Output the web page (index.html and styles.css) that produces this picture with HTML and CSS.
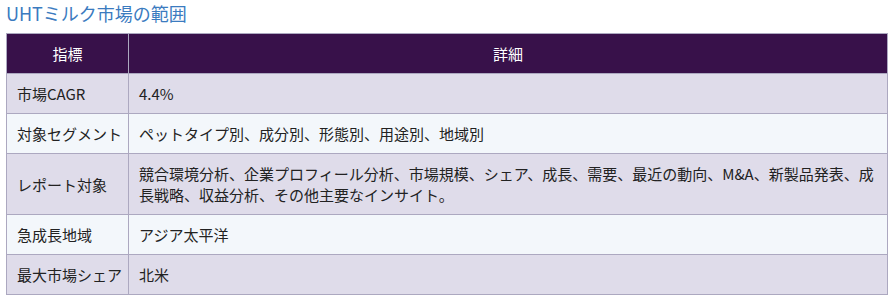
FILE: index.html
```html
<!DOCTYPE html>
<html lang="ja">
<head>
<meta charset="utf-8">
<link rel="stylesheet" href="styles.css">
</head>
<body>
<div class="scope">
  <h3 class="scope-title">UHTミルク市場の範囲</h3>
  <table class="scope-table">
    <colgroup><col class="col-key"><col class="col-val"></colgroup>
    <thead>
      <tr><th>指標</th><th>詳細</th></tr>
    </thead>
    <tbody>
      <tr class="odd"><td class="key">市場CAGR</td><td>4.4%</td></tr>
      <tr class="even"><td class="key">対象セグメント</td><td>ペットタイプ別、成分別、形態別、用途別、地域別</td></tr>
      <tr class="odd"><td class="key">レポート対象</td><td>競合環境分析、企業プロフィール分析、市場規模、シェア、成長、需要、最近の動向、M&amp;A、新製品発表、成長戦略、収益分析、その他主要なインサイト。</td></tr>
      <tr class="even"><td class="key">急成長地域</td><td>アジア太平洋</td></tr>
      <tr class="odd"><td class="key">最大市場シェア</td><td>北米</td></tr>
    </tbody>
  </table>
</div>
</body>
</html>
```
FILE: styles.css
```css
html, body {
  margin: 0;
  padding: 0;
  background: #ffffff;
}
body {
  font-family: "Noto Sans CJK JP", "Noto Sans", sans-serif;
  color: #222222;
}
.scope {
  padding: 0 7px 0 6px;
}
.scope-title {
  margin: 0;
  padding-top: 1px;
  height: 33px;
  box-sizing: border-box;
  font-size: 18px;
  font-weight: normal;
  line-height: 24px;
  color: #3b7bbf;
}
.scope-table {
  width: 882px;
  table-layout: fixed;
  border-collapse: collapse;
  font-size: 15px;
  line-height: 21px;
}
.scope-table .col-key {
  width: 122px;
}
.scope-table th,
.scope-table td {
  border: 1px solid #aca8c0;
  padding: 9px 10px;
  text-align: left;
  vertical-align: middle;
}
.scope-table .key {
  white-space: nowrap;
  padding-right: 0;
}
.scope-table th {
  background: #38114a;
  color: #ffffff;
  font-weight: normal;
  text-align: center;
}
.scope-table .odd td {
  background: #dfdcea;
}
.scope-table .even td {
  background: #f3f7fb;
}
```
